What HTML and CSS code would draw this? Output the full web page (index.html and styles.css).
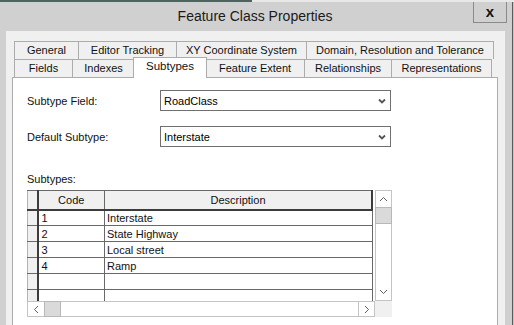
FILE: index.html
```html
<!DOCTYPE html>
<html lang="en">
<head>
  <meta charset="UTF-8">
  <meta name="viewport" content="width=device-width, initial-scale=1.0">
  <title>Feature Class Properties</title>
  <link rel="stylesheet" href="styles.css">
</head>
<body>
  <!-- Strip of the window behind -->
  <div class="top-strip">
    <div class="strip-dark"></div>
    <div class="strip-light"></div>
  </div>

  <div class="screen">
    <div class="window">
      <div class="titlebar">
        <span class="title">Feature Class Properties</span>
        <button class="close-btn">x</button>
      </div>

      <div class="client">
        <!-- Tabs -->
        <div class="tabs">
          <div class="tab-row">
            <div class="tab" style="width: 64px">General</div>
            <div class="tab" style="width: 98px">Editor Tracking</div>
            <div class="tab" style="width: 130px">XY Coordinate System</div>
            <div class="tab last" style="width: 188px">Domain, Resolution and Tolerance</div>
          </div>
          <div class="tab-row">
            <div class="tab" style="width: 58px">Fields</div>
            <div class="tab" style="width: 62px">Indexes</div>
            <div class="tab active" style="width: 74px">Subtypes</div>
            <div class="tab" style="width: 98px">Feature Extent</div>
            <div class="tab" style="width: 87px">Relationships</div>
            <div class="tab last" style="width: 101px">Representations</div>
          </div>
        </div>

        <!-- Subtypes page -->
        <div class="panel">
          <div class="field-row first">
            <span class="label">Subtype Field:</span>
            <div class="select">
              <span>RoadClass</span>
              <svg width="8" height="6" viewBox="0 0 8 6"><path d="M1 1.5 L4 4.5 L7 1.5" fill="none" stroke="#555" stroke-width="1.8"/></svg>
            </div>
          </div>
          <div class="field-row">
            <span class="label">Default Subtype:</span>
            <div class="select">
              <span>Interstate</span>
              <svg width="8" height="6" viewBox="0 0 8 6"><path d="M1 1.5 L4 4.5 L7 1.5" fill="none" stroke="#555" stroke-width="1.8"/></svg>
            </div>
          </div>

          <div class="grid-label">Subtypes:</div>

          <div class="grid-wrap">
            <div class="grid-view">
              <table class="grid">
                <thead>
                  <tr>
                    <th class="sel"></th>
                    <th class="code">Code</th>
                    <th class="desc">Description</th>
                  </tr>
                </thead>
                <tbody>
                  <tr><td class="sel"></td><td>1</td><td>Interstate</td></tr>
                  <tr><td class="sel"></td><td>2</td><td>State Highway</td></tr>
                  <tr><td class="sel"></td><td>3</td><td>Local street</td></tr>
                  <tr><td class="sel"></td><td>4</td><td>Ramp</td></tr>
                  <tr><td class="sel"></td><td></td><td></td></tr>
                  <tr><td class="sel"></td><td></td><td></td></tr>
                </tbody>
              </table>
            </div>

            <div class="vscroll">
              <div class="arrow">
                <svg width="9" height="6" viewBox="0 0 9 6"><path d="M1 5 L4.5 1.5 L8 5" fill="none" stroke="#606060" stroke-width="1"/></svg>
              </div>
              <div class="thumb"></div>
              <div class="track"></div>
              <div class="arrow">
                <svg width="9" height="6" viewBox="0 0 9 6"><path d="M1 1 L4.5 4.5 L8 1" fill="none" stroke="#606060" stroke-width="1"/></svg>
              </div>
            </div>

            <div class="hscroll">
              <div class="arrow">
                <svg width="6" height="9" viewBox="0 0 6 9"><path d="M5 1 L1.5 4.5 L5 8" fill="none" stroke="#606060" stroke-width="1"/></svg>
              </div>
              <div class="thumb"></div>
              <div class="track"></div>
              <div class="arrow">
                <svg width="6" height="9" viewBox="0 0 6 9"><path d="M1 1 L4.5 4.5 L1 8" fill="none" stroke="#606060" stroke-width="1"/></svg>
              </div>
            </div>

            <div class="corner"></div>
          </div>
        </div>
      </div>
    </div>
    <div class="behind"></div>
  </div>
</body>
</html>
```

FILE: styles.css
```css
* {
  margin: 0;
  padding: 0;
  box-sizing: border-box;
}

body {
  width: 514px;
  height: 325px;
  overflow: hidden;
  font-family: 'Liberation Sans', Arial, sans-serif;
  font-size: 11px;
  color: #000;
  background: #d0d0d0;
}

/* Edge of the window behind */
.top-strip {
  display: flex;
  height: 2px;
}

.strip-dark {
  width: 252px;
  background: #4e625e;
}

.strip-light {
  flex: 1;
  background: #e8e8e8;
}

.screen {
  display: flex;
  height: 323px;
}

.window {
  width: 513px;
  height: 100%;
  background: #d0d0d0;
  border-right: 1px solid #5c5c5c;
  display: flex;
  flex-direction: column;
}

.behind {
  flex: 1;
  background: #c9c3c6;
}

/* Title bar */
.titlebar {
  height: 29px;
  display: grid;
  grid-template-columns: 1fr auto 1fr;
  align-items: start;
}

.title {
  grid-column: 2;
  font-size: 14px;
  line-height: 29px;
  color: #1a1a1a;
  padding-right: 2px;
}

.close-btn {
  grid-column: 3;
  justify-self: end;
  width: 34px;
  height: 21px;
  margin-right: 5px;
  background: #d0d0d0;
  border: 1px solid #8a8a8a;
  border-top: none;
  font-family: 'Liberation Sans', Arial, sans-serif;
  font-weight: bold;
  font-size: 15px;
  line-height: 16px;
  color: #111;
}

/* Client area */
.client {
  flex: 1;
  margin: 0 7px 0 6px;
  background: #f0f0f0;
  padding: 10px 0 0 6px;
}

.tabs {
  padding-left: 2px;
}

.tab-row {
  display: flex;
  height: 18px;
}

.tab {
  height: 18px;
  border: 1px solid #acacac;
  border-right: none;
  border-bottom: none;
  background: #f0f0f0;
  text-align: center;
  line-height: 17px;
  white-space: nowrap;
  color: #111;
}

.tab.last {
  border-right: 1px solid #acacac;
}

.tab-row + .tab-row .tab {
  border-top: 1px solid #acacac;
}

.tab.active {
  position: relative;
  z-index: 2;
  height: 21px;
  margin: -2px -1px -1px -1px;
  padding: 0 1px;
  background: #fff;
  border-right: 1px solid #acacac;
  line-height: 16px;
  font-size: 11.5px;
}

.tab.active + .tab {
  border-left: none;
}

.panel {
  width: 486px;
  height: 248px;
  background: #fff;
  border: 1px solid #acacac;
  border-bottom: none;
  padding: 12px 0 0 14px;
}

/* Form rows */
.field-row {
  display: flex;
  align-items: center;
  height: 21px;
  margin-bottom: 15px;
}

.label {
  width: 133px;
  color: #111;
}

.select {
  width: 231px;
  height: 21px;
  border: 1px solid #707070;
  display: flex;
  align-items: center;
  justify-content: space-between;
  padding: 0 4px 0 3px;
}

.select svg {
  margin-top: 1px;
}

.grid-label {
  margin-top: 26px;
  height: 13px;
  line-height: 13px;
  color: #111;
}

/* Grid */
.grid-wrap {
  margin-top: 4px;
  display: grid;
  grid-template-columns: 348px 17px;
  grid-template-rows: 111px 16px;
}

.grid-view {
  overflow: hidden;
  background: #fff;
}

.grid {
  width: 346px;
  border-collapse: collapse;
  table-layout: fixed;
}

.grid th,
.grid td {
  border: 1px solid #696969;
  height: 16px;
  padding: 0 3px;
  text-align: left;
  white-space: nowrap;
  font-weight: normal;
  color: #111;
}

.grid th {
  height: 19px;
  background: #f0f0f0;
  text-align: center;
  border-bottom: 2px solid #3c3c3c;
}

.grid th.desc {
  border-right: 2px solid #3c3c3c;
}

.grid .sel {
  width: 10px;
  padding: 0;
  background: #f0f0f0;
  border-left-color: #b4b4b4;
  border-right: 2px solid #3c3c3c;
}

.grid .code {
  width: 67px;
}

.grid td:last-child {
  padding-left: 2px;
}

/* Scroll bars */
.vscroll {
  display: flex;
  flex-direction: column;
  border: 1px solid #c4c4c4;
  background: #fff;
}

.vscroll .arrow {
  height: 16px;
  display: flex;
  align-items: center;
  justify-content: center;
}

.vscroll .thumb {
  height: 17px;
  background: #dadada;
  border: 1px solid #b8b8b8;
  margin: 0 -1px;
}

.vscroll .track {
  flex: 1;
}

.hscroll {
  display: flex;
  border: 1px solid #c4c4c4;
  background: #fff;
}

.hscroll .arrow {
  width: 16px;
  display: flex;
  align-items: center;
  justify-content: center;
}

.hscroll .arrow:last-child {
  border-left: 1px solid #c4c4c4;
}

.hscroll .thumb {
  width: 17px;
  background: #dadada;
  border: 1px solid #b8b8b8;
  margin: -1px 0;
}

.hscroll .track {
  flex: 1;
}

.corner {
  background: #f0f0f0;
}
```
